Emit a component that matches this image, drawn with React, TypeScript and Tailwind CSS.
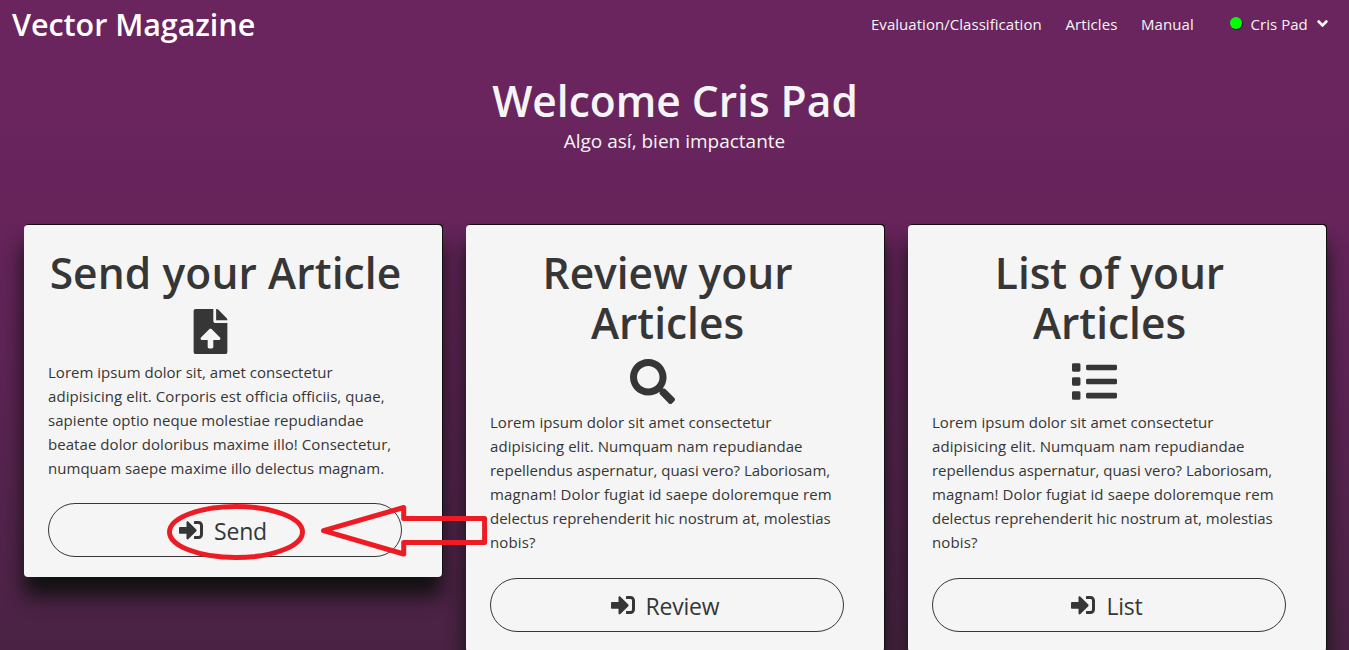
import React from "react";
import { FaAngleDown, FaFileUpload, FaList, FaSearch, FaSignInAlt } from "react-icons/fa";

type Line = { text: string; tracking: string };

type CardProps = {
  heading: Line[];
  icon: React.ReactNode;
  lines: Line[];
  action: string;
};

const sendLines: Line[] = [
  { text: "Lorem ipsum dolor sit, amet consectetur", tracking: "tracking-[0.02px]" },
  { text: "adipisicing elit. Corporis est officia officiis, quae,", tracking: "tracking-[0.07px]" },
  { text: "sapiente optio neque molestiae repudiandae", tracking: "tracking-[0.05px]" },
  { text: "beatae dolor doloribus maxime illo! Consectetur,", tracking: "tracking-[0.06px]" },
  { text: "numquam saepe maxime illo delectus magnam.", tracking: "tracking-[0.03px]" },
];

const reviewLines: Line[] = [
  { text: "Lorem ipsum dolor sit amet consectetur", tracking: "tracking-[0.04px]" },
  { text: "adipisicing elit. Numquam nam repudiandae", tracking: "tracking-[0.06px]" },
  { text: "repellendus aspernatur, quasi vero? Laboriosam,", tracking: "tracking-[-0.03px]" },
  { text: "magnam! Dolor fugiat id saepe doloremque rem", tracking: "tracking-[0.11px]" },
  { text: "delectus reprehenderit hic nostrum at, molestias", tracking: "tracking-[0px]" },
  { text: "nobis?", tracking: "tracking-[0.15px]" },
];

function Card({ heading, icon, lines, action }: CardProps) {
  return (
    <article className="flex w-[418px] shrink-0 flex-col rounded bg-[#f5f5f5] pt-[23px] pr-10 pb-5 pl-6 text-[#363636] shadow-[1px_-1px_0_#111,0_19px_20px_0_#111]">
      <h2 className="pl-px text-center text-[42.5px] leading-[50.3px] font-semibold">
        {heading.map((l) => (
          <span key={l.text} className={`block whitespace-nowrap ${l.tracking}`}>
            {l.text}
          </span>
        ))}
      </h2>
      <div className="mt-[10.5px] flex justify-center pr-[29px] text-[45px]">{icon}</div>
      <p className="mt-[6px] text-[15px] leading-6">
        {lines.map((l) => (
          <span key={l.text} className={`block whitespace-nowrap ${l.tracking}`}>
            {l.text}
          </span>
        ))}
      </p>
      <button className="mt-[23.5px] flex h-[54px] items-center justify-center rounded-full border border-[#363636] pr-[4px] text-[23px]">
        <FaSignInAlt className="mr-[11px] text-[24px]" />
        <span className="pt-[2.2px] leading-[30px] tracking-[-0.2px]">{action}</span>
      </button>
    </article>
  );
}

export default function App() {
  return (
    <div className="relative h-[650px] overflow-hidden bg-[linear-gradient(180deg,#6a255f_0px,#6a255f_100px,#66245b_215px,#572350_450px,#4a2344_650px)] font-['Open_Sans','Noto_Sans',sans-serif] text-[#f5f5f5]">
      <nav className="flex h-12 items-center justify-between pl-3 text-[15px]">
        <a className="text-[30.5px] leading-none font-semibold tracking-[-0.05px] text-white">Vector Magazine</a>
        <div className="flex items-center">
          <a className="w-[194.5px] tracking-[0.04px]">Evaluation/Classification</a>
          <a className="w-[75.5px] tracking-[0.08px]">Articles</a>
          <a className="w-[89px] tracking-[0.1px]">Manual</a>
          <div className="flex w-[119px] items-center">
            <span className="mb-[2px] h-3 w-3 rounded-full bg-[#00ff00] shadow-[1px_1px_1px_#222]" />
            <a className="ml-[8.5px] tracking-[0.05px]">Cris Pad</a>
            <FaAngleDown className="mb-[2px] ml-[6px] text-[17px]" />
          </div>
        </div>
      </nav>

      <header className="flex flex-col items-center pt-[27px]">
        <h1 className="pl-px text-[42.5px] leading-[51px] font-semibold">Welcome Cris Pad</h1>
        <p className="pt-px text-[19px] leading-[28px]">Algo así, bien impactante</p>
      </header>

      <main className="flex items-start gap-6 px-6 pt-[70px]">
        <Card
          heading={[{ text: "Send your Article", tracking: "tracking-[0.1px]" }]}
          icon={<FaFileUpload />}
          lines={sendLines}
          action="Send"
        />
        <Card
          heading={[
            { text: "Review your", tracking: "tracking-[-0.05px]" },
            { text: "Articles", tracking: "tracking-[0px]" },
          ]}
          icon={<FaSearch />}
          lines={reviewLines}
          action="Review"
        />
        <Card
          heading={[
            { text: "List of your", tracking: "tracking-[-0.05px]" },
            { text: "Articles", tracking: "tracking-[0px]" },
          ]}
          icon={<FaList />}
          lines={reviewLines}
          action="List"
        />
      </main>

      <svg
        className="pointer-events-none absolute top-[500px] left-[160px]"
        width="330"
        height="64"
        viewBox="160 500 330 64"
        fill="none"
        stroke="#ed1c24"
        strokeWidth="5"
        strokeLinejoin="round"
      >
        <ellipse cx="236" cy="532" rx="66.5" ry="25.5" />
        <path d="M323.5 530.7 L403.7 507.5 V518.4 H484.6 V542.5 H403.7 V554 Z" />
      </svg>
    </div>
  );
}
